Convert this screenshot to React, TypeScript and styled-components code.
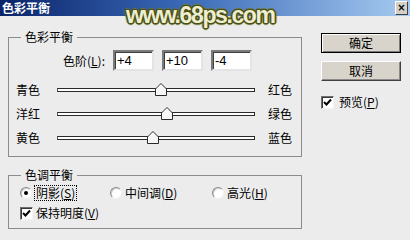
import styled, { createGlobalStyle } from "styled-components";

const GlobalStyle = createGlobalStyle`
    html, body {
        margin: 0;
        padding: 0;
        background: #ececec;
    }
    body {
        font-family: "Noto Sans CJK SC", "Liberation Sans", sans-serif;
        font-size: 12px;
        color: #000;
    }
`;

const Dialog = styled.div`
    position: relative;
    width: 410px;
    height: 240px;
    background: #ececec;
    overflow: hidden;
`;

const TitleBar = styled.div`
    display: flex;
    align-items: center;
    justify-content: space-between;
    height: 16px;
    padding: 0 2px;
    background: linear-gradient(to right, #0a246a 0%, #3a6ab8 45%, #a6caf0 100%);
`;
const TitleText = styled.span`
    color: #fff;
    font-weight: bold;
    font-size: 12px;
    line-height: 14px;
`;
const CloseBtn = styled.span`
    display: flex;
    align-items: center;
    justify-content: center;
    width: 13px;
    height: 14px;
    box-sizing: border-box;
    background: #d4d0c8;
    border: 1px solid;
    border-color: #fff #404040 #404040 #fff;
    font-family: "DejaVu Sans", sans-serif;
    font-weight: bold;
    font-size: 10px;
    line-height: 1;
`;

// 워터마크 (위에 겹쳐짐)
const Watermark = styled.div`
    position: absolute;
    left: 126px;
    top: 2px;
    font-family: "Liberation Sans", Arial, sans-serif;
    font-weight: bold;
    font-size: 23px;
    line-height: 26px;
    letter-spacing: -1.4px;
    color: #eeeed2;
    text-shadow:
        1px 0 0 #4a4f14, -1px 0 0 #4a4f14, 0 1px 0 #4a4f14, 0 -1px 0 #4a4f14,
        1px 1px 0 #4a4f14, -1px -1px 0 #4a4f14, 1px -1px 0 #4a4f14, -1px 1px 0 #4a4f14,
        2px 0 1px #6d7232, -2px 0 1px #6d7232, 0 2px 1px #6d7232, 0 -2px 1px #6d7232;
`;

const Body = styled.div`
    display: flex;
    padding-left: 8px;
`;
const LeftCol = styled.div`
    width: 294px;
    margin-top: 14px;
`;
const RightCol = styled.div`
    display: flex;
    flex-direction: column;
    margin-left: 19px;
    margin-top: 17px;
`;

const Group = styled.fieldset<{ $gap?: number }>`
    margin: ${({ $gap }) => $gap || 0}px 0 0;
    padding: 0 0 6px;
    border: 1px solid #8c8c8c;
    min-width: 0;
    legend {
        margin-left: 12px;
        padding: 0 4px;
        line-height: 14px;
        height: 14px;
        background: #ececec;
    }
`;

const LevelRow = styled.div`
    display: flex;
    align-items: center;
    gap: 8px;
    margin-top: 6px;
`;
const LevelLabel = styled.span`
    width: 96px;
    text-align: right;
`;
const NumBox = styled.div`
    width: 41px;
    height: 21px;
    box-sizing: border-box;
    padding-left: 2px;
    background: #fff;
    border: 2px solid;
    border-color: #7a7a7a #e4e4e4 #e4e4e4 #7a7a7a;
    box-shadow: inset 1px 1px 0 #404040;
    font-family: "Liberation Sans", Arial, sans-serif;
    font-size: 13px;
    line-height: 17px;
`;

const SliderList = styled.div`
    margin-top: 7px;
`;
const SliderRow = styled.div`
    display: flex;
    align-items: center;
    height: 24px;
    padding-left: 7px;
`;
const SideLabel = styled.span<{ $w: number }>`
    width: ${({ $w }) => $w}px;
    line-height: 14px;
`;
const Track = styled.div`
    position: relative;
    width: 198px;
    height: 4px;
    box-sizing: border-box;
    margin-right: 13px;
    background: #fdfdfd;
    border: 1px solid #2a2a2a;
    border-left-color: #555;
`;
const Thumb = styled.svg`
    position: absolute;
    top: -6px;
    width: 12px;
    height: 13px;
    margin-left: -6px;
`;

const OptionRow = styled.div<{ $top: number }>`
    display: flex;
    align-items: center;
    height: 18px;
    margin-top: ${({ $top }) => $top}px;
    padding-left: 11px;
`;
const Option = styled.label<{ $w?: number }>`
    display: flex;
    align-items: center;
    gap: 3px;
    width: ${({ $w }) => ($w ? `${$w}px` : "auto")};
    line-height: 14px;
`;
const Radio = styled.span<{ $on?: boolean }>`
    position: relative;
    width: 12px;
    height: 12px;
    box-sizing: border-box;
    border-radius: 50%;
    background: #fff;
    border: 1px solid;
    border-color: #8a8a8a #f2f2f2 #f2f2f2 #8a8a8a;
    box-shadow: inset 1px 1px 0 #cfcfcf;
    &::after {
        content: "";
        display: ${({ $on }) => ($on ? "block" : "none")};
        position: absolute;
        left: 3px;
        top: 3px;
        width: 4px;
        height: 4px;
        border-radius: 50%;
        background: #000;
    }
`;
const Focus = styled.span`
    padding: 0 1px;
    outline: 1px dotted #000;
    outline-offset: 0;
`;
const Check = styled.span`
    display: flex;
    align-items: center;
    justify-content: center;
    width: 13px;
    height: 13px;
    box-sizing: border-box;
    background: #fff;
    border: 1px solid;
    border-color: #6e6e6e #f4f4f4 #f4f4f4 #6e6e6e;
    box-shadow: inset 1px 1px 0 #3a3a3a;
    svg {
        width: 9px;
        height: 9px;
    }
`;

const Button = styled.button<{ $def?: boolean }>`
    width: 80px;
    height: 20px;
    padding: 0;
    box-sizing: border-box;
    background: #d8d4cc;
    font-family: inherit;
    font-size: 12px;
    line-height: 14px;
    color: #000;
    border: 1px solid;
    border-color: ${({ $def }) => ($def ? "#000" : "#fff #404040 #404040 #fff")};
    box-shadow: ${({ $def }) =>
        $def ? "inset 1px 1px 0 #fff, inset -1px -1px 0 #7a7a7a" : "inset -1px -1px 0 #8a8a8a"};
    & + & {
        margin-top: 8px;
    }
`;
const PreviewRow = styled.label`
    display: flex;
    align-items: center;
    gap: 5px;
    margin-top: 14px;
    line-height: 14px;
`;

const CheckMark = () => (
    <svg viewBox="0 0 9 9">
        <path d="M1 4 L3.5 6.5 L8 1.5" fill="none" stroke="#000" strokeWidth="2" />
    </svg>
);

const sliders = [
    { left: "青色", right: "红色", value: 4 },
    { left: "洋红", right: "绿色", value: 10 },
    { left: "黄色", right: "蓝色", value: -4 },
];

function App() {
    const trackWidth = 198;
    return (
        <>
            <GlobalStyle />
            <Dialog>
                <TitleBar>
                    <TitleText>色彩平衡</TitleText>
                    <CloseBtn>×</CloseBtn>
                </TitleBar>
                <Watermark>www.68ps.com</Watermark>

                <Body>
                    <LeftCol>
                        <Group>
                            <legend>色彩平衡</legend>
                            <LevelRow>
                                <LevelLabel>色阶(<u>L</u>):</LevelLabel>
                                <NumBox>+4</NumBox>
                                <NumBox>+10</NumBox>
                                <NumBox>-4</NumBox>
                            </LevelRow>
                            <SliderList>
                                {sliders.map((s) => (
                                    <SliderRow key={s.left}>
                                        <SideLabel $w={41}>{s.left}</SideLabel>
                                        <Track>
                                            <Thumb
                                                viewBox="0 0 12 13"
                                                style={{ left: `${((s.value + 100) / 200) * trackWidth}px` }}
                                            >
                                                <path d="M6 0.5 L11.5 6 L11.5 12.5 L0.5 12.5 L0.5 6 Z" fill="#f6f6f6" stroke="#2a2a2a" />
                                                <path d="M1.5 6.4 L6 1.9 M1.5 6.4 L1.5 11.5" fill="none" stroke="#fff" />
                                            </Thumb>
                                        </Track>
                                        <SideLabel $w={30}>{s.right}</SideLabel>
                                    </SliderRow>
                                ))}
                            </SliderList>
                        </Group>

                        <Group $gap={11}>
                            <legend>色调平衡</legend>
                            <OptionRow $top={2}>
                                <Option $w={90}>
                                    <Radio $on />
                                    <Focus>阴影(<u>S</u>)</Focus>
                                </Option>
                                <Option $w={102}>
                                    <Radio />
                                    <span>中间调(<u>D</u>)</span>
                                </Option>
                                <Option>
                                    <Radio />
                                    <span>高光(<u>H</u>)</span>
                                </Option>
                            </OptionRow>
                            <OptionRow $top={2}>
                                <Option>
                                    <Check><CheckMark /></Check>
                                    <span>保持明度(<u>V</u>)</span>
                                </Option>
                            </OptionRow>
                        </Group>
                    </LeftCol>

                    <RightCol>
                        <Button $def>确定</Button>
                        <Button>取消</Button>
                        <PreviewRow>
                            <Check><CheckMark /></Check>
                            <span>预览(<u>P</u>)</span>
                        </PreviewRow>
                    </RightCol>
                </Body>
            </Dialog>
        </>
    );
}

export default App;
